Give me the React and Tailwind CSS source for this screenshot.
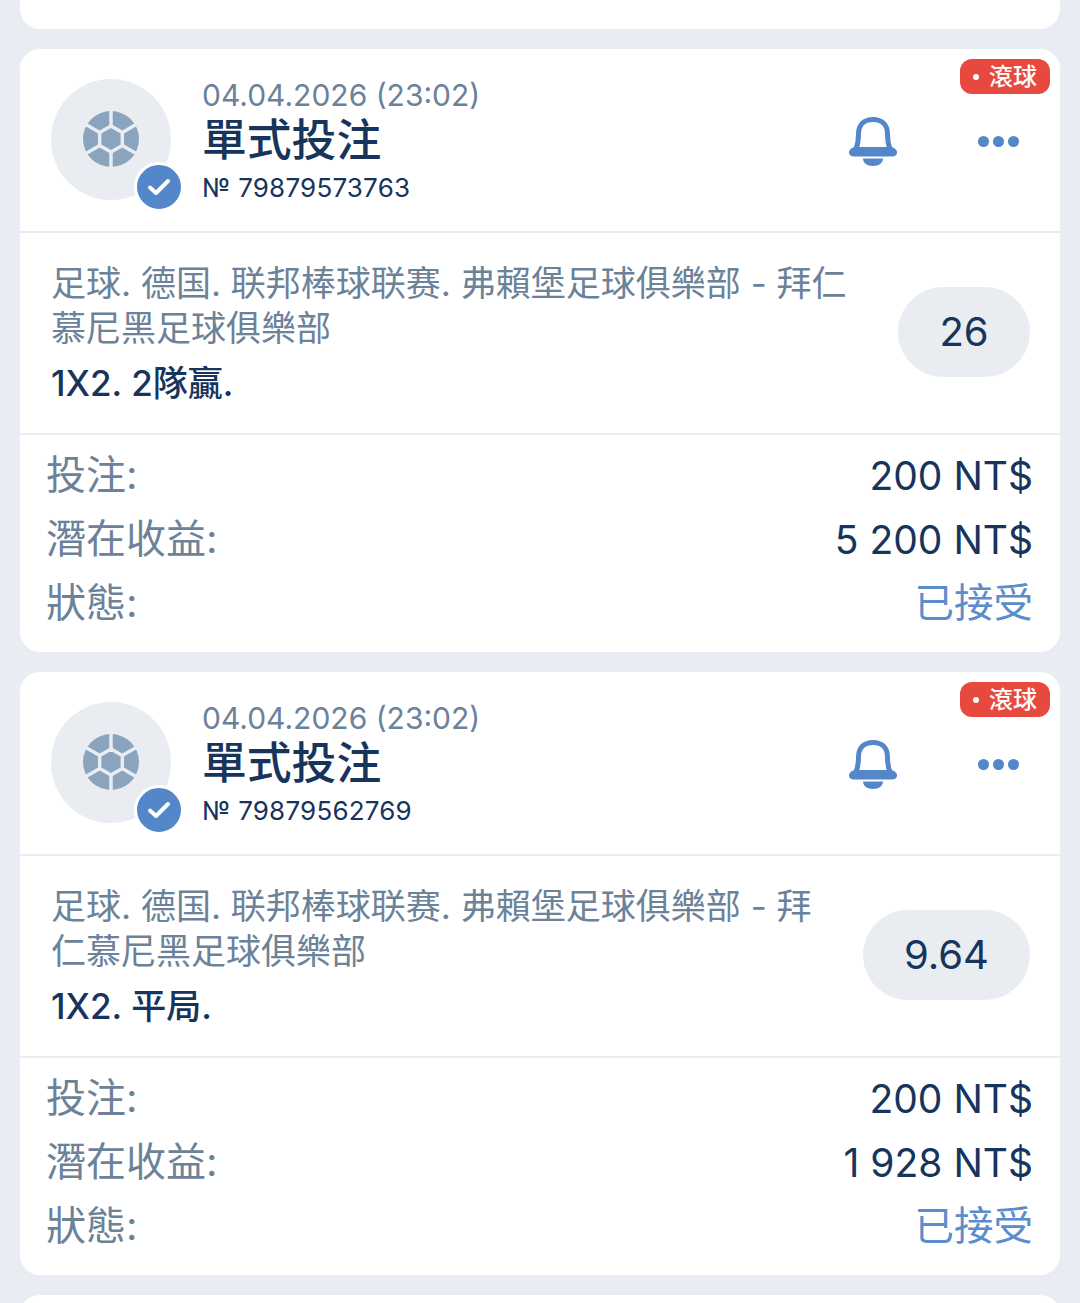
const font = { fontFamily: 'Inter, "Noto Sans CJK TC", sans-serif' };

const bets = [
  {
    id: '79879573763',
    match: '足球. 德国. 联邦棒球联赛. 弗賴堡足球俱樂部 - 拜仁\n慕尼黑足球俱樂部',
    pick: '1X2. 2隊贏.',
    odds: '26',
    payout: '5 200 NT$',
    oddsWidth: 'w-[132px]',
  },
  {
    id: '79879562769',
    match: '足球. 德国. 联邦棒球联赛. 弗賴堡足球俱樂部 - 拜\n仁慕尼黑足球俱樂部',
    pick: '1X2. 平局.',
    odds: '9.64',
    payout: '1 928 NT$',
    oddsWidth: 'w-[167px]',
  },
];

const BallIcon = () => (
  <svg width="58" height="58" viewBox="0 0 58 58">
    <circle cx="29" cy="29" r="28" fill="#8aa4bd" />
    <g stroke="#e9edf2" strokeWidth="3.5">
      <line x1="29" y1="29" x2="29" y2="0" />
      <line x1="29" y1="29" x2="29" y2="58" />
      <line x1="29" y1="29" x2="54.1" y2="14.5" />
      <line x1="29" y1="29" x2="3.9" y2="14.5" />
      <line x1="29" y1="29" x2="54.1" y2="43.5" />
      <line x1="29" y1="29" x2="3.9" y2="43.5" />
    </g>
    <path d="M29 16 40.300 22.500v13L29 42 17.700 35.500v-13z" fill="#8aa4bd" stroke="#e9edf2" strokeWidth="3.5" strokeLinejoin="round" />
  </svg>
);

const BellIcon = () => (
  <svg className="mt-[3px] shrink-0" width="48" height="49" viewBox="0 0 48 49" fill="none">
    <path d="M7 32C9 27 9.500 24 9.500 17 9.500 8 15 2.500 24 2.500S38.500 8 38.500 17C38.500 24 39 27 41 32" stroke="#5387c9" strokeWidth="5" strokeLinecap="round" />
    <path d="M0 35.500C0 32.500 3 30 7 30H41C45 30 48 32.500 48 35.500 48 38 46 39.500 43 39.500H5C2 39.500 0 38 0 35.500z" fill="#5387c9" />
    <path d="M14 41.500H34C34 46 30 49 24 49S14 46 14 41.500z" fill="#5387c9" />
  </svg>
);

const Row = ({ label, value, valueClass = 'text-[39px] text-[#16345c]' }) => (
  <div className="flex h-[64px] items-center justify-between">
    <span className="text-[40px] text-[#6b8299]">{label}</span>
    <span className={`mt-[2px] ${valueClass}`}>{value}</span>
  </div>
);

const BetCard = ({ bet }) => (
  <div className="relative h-[603px] shrink-0 overflow-hidden rounded-[20px] bg-white">
    <div className="absolute right-[10px] top-[10px] flex h-[35px] w-[90px] items-center justify-center gap-[10px] rounded-[12px] bg-[#e8493f] text-[24px] font-medium leading-none text-white">
      <span className="h-[6px] w-[6px] rounded-full bg-white" />
      <span>滾球</span>
    </div>

    <div className="flex h-[182px] items-center pl-[31px] pr-[41px]">
      <div className="relative mb-[2px] h-[121px] w-[120px] shrink-0 rounded-full bg-[#e9edf2]">
        <div className="flex h-full items-center justify-center">
          <BallIcon />
        </div>
        <div className="absolute left-[83px] top-[83px] flex h-[50px] w-[50px] items-center justify-center rounded-full border-[3px] border-white bg-[#5387c9]">
          <svg width="24" height="20" viewBox="0 0 24 20" fill="none" stroke="white" strokeWidth="4" strokeLinecap="round" strokeLinejoin="round">
            <path d="M3 10.500 9 16 21 4" />
          </svg>
        </div>
      </div>
      <div className="ml-[31px] flex-1">
        <div className="text-[30px] leading-[36px] text-[#6b8299]">04.04.2026 (23:02)</div>
        <div className="mt-[1px] text-[44.800px] font-medium leading-[52px] text-[#16345c]">單式投注</div>
        <div className="mt-[6px] text-[26px] leading-[32px] tracking-[0.2px] text-[#16345c]">№ {bet.id}</div>
      </div>
      <BellIcon />
      <div className="ml-[81px] mt-[2px] flex gap-[4px]">
        <span className="h-[11px] w-[11px] rounded-full bg-[#5387c9]" />
        <span className="h-[11px] w-[11px] rounded-full bg-[#5387c9]" />
        <span className="h-[11px] w-[11px] rounded-full bg-[#5387c9]" />
      </div>
    </div>

    <div className="flex h-[204px] items-center justify-between border-y-2 border-[#e9edf2] pl-[31px] pr-[30px]">
      <div>
        <div className="whitespace-pre-line text-[35px] leading-[45px] text-[#6b8299]">{bet.match}</div>
        <div className="mt-[10px] text-[35px] font-medium leading-[45px] text-[#16345c]">{bet.pick}</div>
      </div>
      <div className={`mb-[2px] flex h-[90px] ${bet.oddsWidth} shrink-0 items-center justify-center rounded-[45px] bg-[#e9edf2] text-[40px] text-[#16345c]`}>
        {bet.odds}
      </div>
    </div>

    <div className="pl-[26px] pr-[27px] pt-[8px]">
      <Row label="投注:" value="200 NT$" />
      <Row label="潛在收益:" value={bet.payout} />
      <Row label="狀態:" value="已接受" valueClass="text-[39.500px] text-[#5b8ccb]" />
    </div>
  </div>
);

export default function App() {
  return (
    <div style={font} className="flex h-[1303px] flex-col gap-[20px] overflow-hidden bg-[#e9edf3] px-[20px]">
      <div className="h-[29px] shrink-0 rounded-b-[20px] bg-white" />
      {bets.map((bet) => (
        <BetCard key={bet.id} bet={bet} />
      ))}
      <div className="h-[40px] shrink-0 rounded-t-[20px] bg-white" />
    </div>
  );
}
